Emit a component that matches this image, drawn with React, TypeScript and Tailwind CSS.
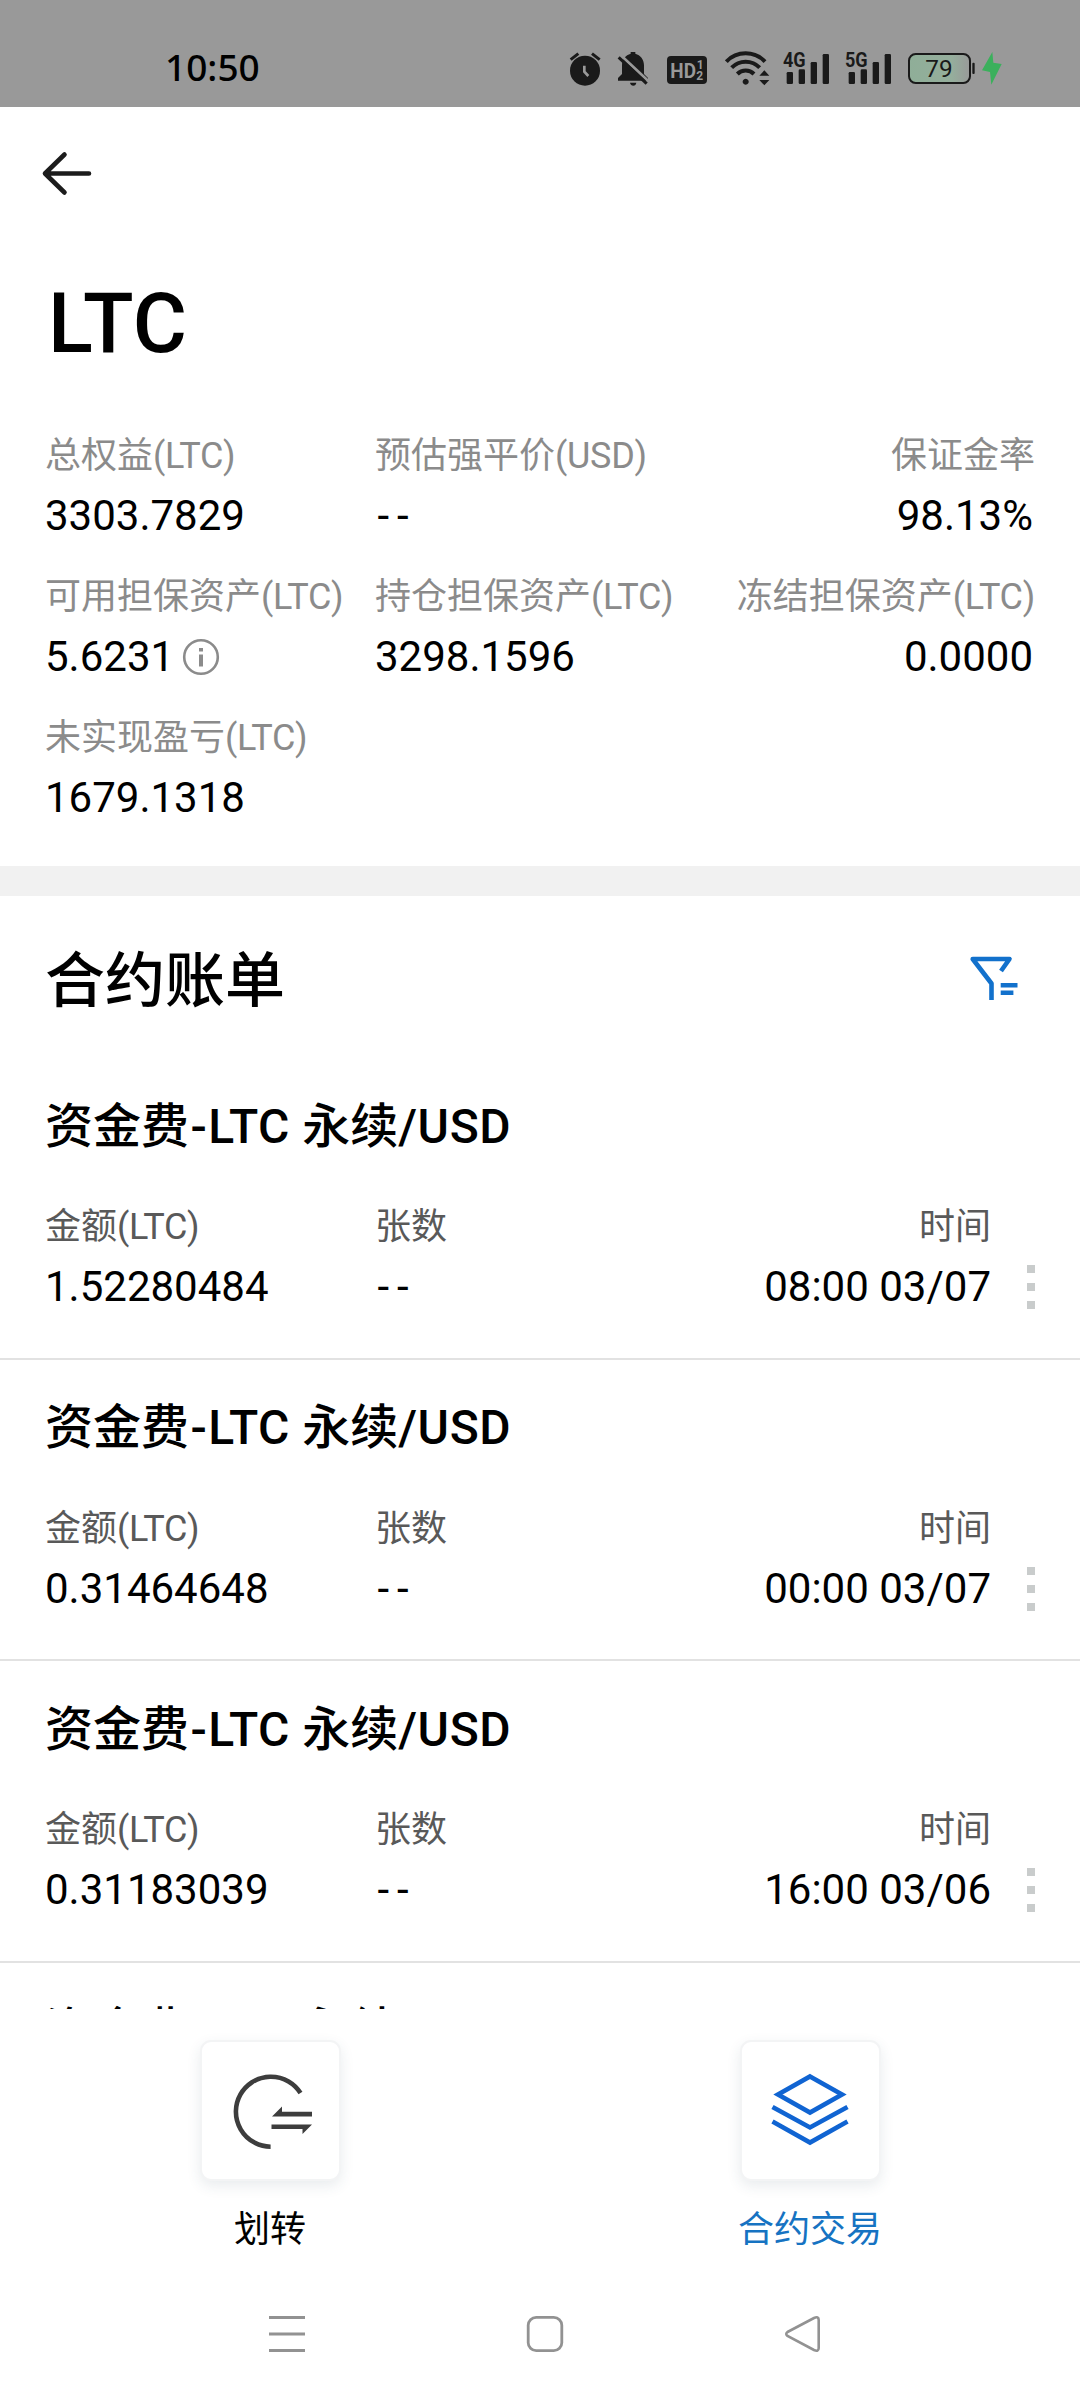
import type { ReactNode } from "react";

const SUMMARY = [
  { label: "总权益", unit: "(LTC)", value: "3303.7829" },
  { label: "预估强平价", unit: "(USD)", value: "--" },
  { label: "保证金率", unit: "", value: "98.13%" },
  { label: "可用担保资产", unit: "(LTC)", value: "5.6231", info: true },
  { label: "持仓担保资产", unit: "(LTC)", value: "3298.1596" },
  { label: "冻结担保资产", unit: "(LTC)", value: "0.0000" },
  { label: "未实现盈亏", unit: "(LTC)", value: "1679.1318" },
];

const BILLS = [
  { amount: "1.52280484", time: "08:00 03/07" },
  { amount: "0.31464648", time: "00:00 03/07" },
  { amount: "0.31183039", time: "16:00 03/06" },
];

function Signal({ label }: { label: string }) {
  return (
    <svg width="47" height="36" viewBox="729 60 141 108" fill="#1a1a1a">
      <rect x="740" y="126" width="19" height="36" rx="4" />
      <rect x="776" y="118" width="19" height="44" rx="4" />
      <rect x="812" y="96" width="19" height="66" rx="4" />
      <rect x="848" y="72" width="19" height="90" rx="4" />
      <text x="729" y="110" fontSize="58" fontWeight="700" textLength="68" lengthAdjust="spacingAndGlyphs">
        {label}
      </text>
    </svg>
  );
}

function StatusBar() {
  return (
    <div className="flex h-[107px] items-start justify-between bg-[#999999] pt-[50px] pr-[77px] pl-[165px]">
      <span className="-mt-[1px] font-['Noto_Sans',sans-serif] text-[37px] leading-[36px] font-medium">10:50</span>
      <div className="flex">
        <svg width="36" height="36" viewBox="84 60 108 108" fill="none">
          <circle cx="135" cy="122" r="45" fill="#1a1a1a" />
          <path d="M92 89 115 71M156 71 179 89" stroke="#1a1a1a" strokeWidth="9" />
          <path d="M133 107V125L145 138" stroke="#999" strokeWidth="8" />
        </svg>
        <svg className="ml-3" width="34" height="36" viewBox="228 60 102 108">
          <path
            d="M234 152v-8l12-12V106c0-18 11-31 26-35v-5h14v5c15 4 26 17 26 35v26l12 12v8z"
            fill="#1a1a1a"
          />
          <path d="M270 158h19c-1 6-4 9-9 9s-9-3-10-9z" fill="#1a1a1a" />
          <path d="M241 74 328 156" stroke="#999" strokeWidth="8" />
          <path d="M236 82 320 161" stroke="#1a1a1a" strokeWidth="9" />
        </svg>
        <svg className="ml-[17px]" width="40" height="36" viewBox="381 60 120 108">
          <rect x="381" y="78" width="120" height="84" rx="12" fill="#1a1a1a" />
          <g fill="#999" fontWeight="700">
            <text x="391" y="143" fontSize="62" textLength="77" lengthAdjust="spacingAndGlyphs">
              HD
            </text>
            <text x="470" y="117" fontSize="36">
              1
            </text>
            <text x="469" y="151" fontSize="36">
              2
            </text>
          </g>
        </svg>
        <svg className="ml-[18px]" width="45" height="36" viewBox="555 60 135 108" fill="none">
          <g stroke="#1a1a1a" strokeWidth="12">
            <path d="M559 95A80 80 0 0 1 675 95" />
            <path d="M575 113A58 58 0 0 1 659 113" />
            <path d="M592 132A35 35 0 0 1 642 132" />
          </g>
          <path d="M617 146a9 9 0 1 0 .1 0zM673 121l15 16h-30zM673 166l15-16h-30z" fill="#1a1a1a" />
        </svg>
        <div className="ml-[13px]">
          <Signal label="4G" />
        </div>
        <div className="ml-[15.7px]">
          <Signal label="5G" />
        </div>
        <svg className="ml-[14.6px]" width="68" height="36" viewBox="1101 60 204 108">
          <defs>
            <linearGradient id="charge">
              <stop offset="0" stopColor="#8fae98" />
              <stop offset="0.7" stopColor="#95ae9c" />
              <stop offset="1" stopColor="#999999" />
            </linearGradient>
          </defs>
          <rect x="1107" y="72" width="183" height="87" rx="20" fill="url(#charge)" stroke="#1a1a1a" strokeWidth="6" />
          <rect x="1297" y="98" width="7" height="34" rx="3" fill="#1a1a1a" />
          <text x="1156" y="142" fontSize="72" textLength="82" lengthAdjust="spacingAndGlyphs" fill="#1a1a1a">
            79
          </text>
        </svg>
        <svg className="ml-[6px]" width="22" height="36" viewBox="1323 60 66 108">
          <path d="M1357 66l-31 55 24 5 4 38 31-62-25-4z" fill="#3bb05c" />
        </svg>
      </div>
    </div>
  );
}

function Value({ children }: { children: string }) {
  return (
    <span className={children === "--" ? "pl-[2.5px] tracking-[8px]" : ""}>
      {children}
    </span>
  );
}

function BillTitle() {
  return (
    <h3 className="text-[48px] leading-[60px] font-medium whitespace-nowrap">
      资金费<span className="px-[1.5px]">-</span>
      <span className="tracking-[0.5px]">LTC </span>永续<span className="tracking-[0.6px]">/USD</span>
    </h3>
  );
}

function Bill({ amount, time }: { amount: string; time: string }) {
  return (
    <div className="flex h-[301.5px] shrink-0 flex-col border-b-2 border-[#e2e2e2] pr-[45px] pl-[45px] pt-[38.5px]">
      <BillTitle />
      <div className="mt-[43.5px] flex">
        <div className="w-[330px]">
          <p className="text-[36px] leading-[54px] text-[#595959]">
            金额<span className="tracking-[-0.3px]">(LTC)</span>
          </p>
          <p className="mt-[6px] text-[42px] leading-[54px]">{amount}</p>
        </div>
        <div className="flex-1">
          <p className="text-[36px] leading-[54px] text-[#595959]">张数</p>
          <p className="mt-[6px] text-[42px] leading-[54px]">
            <Value>--</Value>
          </p>
        </div>
        <div className="text-right">
          <p className="text-[36px] leading-[54px] text-[#595959]">时间</p>
          <p className="mt-[6px] text-[42px] leading-[54px]">{time}</p>
        </div>
        <div className="ml-[36px] flex flex-col gap-[10px] pt-[65px]">
          <i className="size-2 bg-[#c9cccc]" />
          <i className="size-2 bg-[#c9cccc]" />
          <i className="size-2 bg-[#c9cccc]" />
        </div>
      </div>
    </div>
  );
}

function Action({ label, className, children }: { label: string; className?: string; children: ReactNode }) {
  return (
    <button className="flex w-1/2 flex-col items-center">
      <span className="flex size-[141px] items-center justify-center rounded-[11px] border-2 border-[#f3f4f5] bg-white shadow-[0_5px_14px_rgba(40,70,90,0.10)]">
        {children}
      </span>
      <span className={`mt-[22px] text-[36px] leading-[54px] ${className ?? ""}`}>{label}</span>
    </button>
  );
}

export default function App() {
  return (
    <div className="flex h-[2400px] w-[1080px] flex-col overflow-hidden bg-white font-[Roboto,'Noto_Sans_CJK_SC',sans-serif] text-black">
      <StatusBar />

      <header className="h-[148px] pt-[43px] pl-[40px]">
        <svg width="54" height="48" viewBox="40 150 54 48" fill="none" stroke="#1c1c1c" strokeWidth="4.6" strokeLinecap="round" strokeLinejoin="round">
          <path d="M64.5 154.5 45 173.5 64.5 192.5M45 173.5H89" />
        </svg>
      </header>

      <h1 className="h-[169px] pl-[48px] pt-[19px] text-[83px] leading-[100px] font-medium tracking-[0.3px]">LTC</h1>

      <section className="grid h-[442px] grid-cols-[330px_330px_330px] content-start px-[45px] pt-[4.5px]">
        {SUMMARY.map((item, i) => (
          <div key={item.label} className={i % 3 === 2 ? "h-[141px] text-right" : "h-[141px]"}>
            <p className="text-[36px] leading-[54px] whitespace-nowrap text-[#8b8b8b]">
              {item.label}
              <span className="tracking-[-0.3px]">{item.unit}</span>
            </p>
            <p className={i % 3 === 2 ? "mt-[6px] pr-[2px] text-[42px] leading-[54px]" : "mt-[6px] text-[42px] leading-[54px]"}>
              <Value>{item.value}</Value>
              {item.info && (
                <svg className="ml-[8px] inline-block align-[-5px]" width="38" height="38" viewBox="0 0 38 38" fill="none">
                  <circle cx="19" cy="19" r="16.8" stroke="#8b8b8b" strokeWidth="2.6" />
                  <path d="M19 10v3.6M19 16.5v12" stroke="#8b8b8b" strokeWidth="4" />
                </svg>
              )}
            </p>
          </div>
        ))}
      </section>

      <div className="h-[30px] shrink-0 bg-[#f1f1f1]" />

      <div className="flex h-[162px] shrink-0 items-start justify-between pt-[46px] pr-[60px] pl-[45px]">
        <h2 className="text-[60px] leading-[80px] font-medium">合约账单</h2>
        <svg className="mt-[12px]" width="52" height="48" viewBox="968 954 52 48" fill="none" stroke="#1271cc" strokeWidth="4.6">
          <path d="M1001 971 1009.5 959H972.7L991.5 983.5V1000" strokeLinejoin="round" />
          <path d="M1000.7 985.2H1017.5M1000.7 992.7H1013.4" />
        </svg>
      </div>

      <div className="flex h-[951px] shrink-0 flex-col overflow-hidden">
        {BILLS.map((bill) => (
          <Bill key={bill.time} {...bill} />
        ))}
        {/* next bill, scrolled under the action bar */}
        <div className="shrink-0 pt-[38.5px] pl-[45px]">
          <BillTitle />
        </div>
      </div>

      <div className="flex h-[271px] shrink-0 pt-[31px]">
        <Action label="划转">
          <svg width="90" height="90" viewBox="225 2065.5 90 90" fill="none">
            <path d="M300.5 2092.5A35 35 0 1 0 270.6 2146.2" stroke="#3d3d3d" strokeWidth="4.6" />
            <path d="M272 2116l10-10v5.2h30v4.8zM312 2124l-9.5 9.5v-4.9h-31v-4.6z" fill="#3d3d3d" />
          </svg>
        </Action>
        <Action label="合约交易" className="text-[#1673c2]">
          <svg width="90" height="90" viewBox="765 2065.5 90 90" fill="none" stroke="#1064d2" strokeWidth="4.6">
            <path d="M810 2076 842 2094 810 2112 778 2094z" />
            <path d="M772.5 2106.5 810 2127 847.5 2106.5M772.5 2121 810 2142 847.5 2121" />
          </svg>
        </Action>
      </div>

      <nav className="flex justify-between pt-[34px] pr-[257px] pl-[267px]">
        <svg width="40" height="40" viewBox="267 2314 40 40" stroke="#929292" strokeWidth="3">
          <path d="M269 2317.5H305M269 2334H305M269 2350.5H305" />
        </svg>
        <svg width="40" height="40" viewBox="525 2314 40 40" fill="none" stroke="#929292" strokeWidth="2.8">
          <rect x="528.2" y="2317.3" width="33.6" height="33.4" rx="8" />
        </svg>
        <svg width="40" height="40" viewBox="783 2314 40 40" fill="none" stroke="#929292" strokeWidth="2.6">
          <path d="M787.5 2332 814 2318Q818.7 2316 818.7 2320V2348Q818.7 2352 814 2350L787.5 2336Q785 2334 787.5 2332z" />
        </svg>
      </nav>
    </div>
  );
}
